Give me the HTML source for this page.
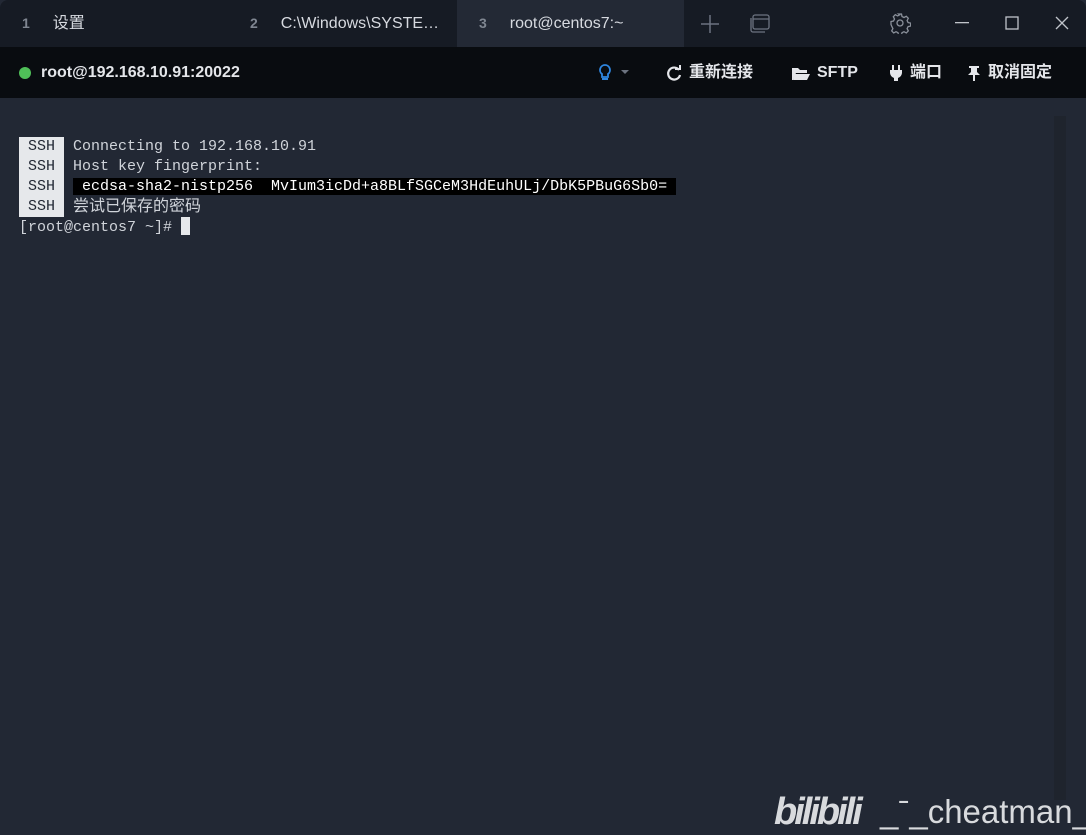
<!DOCTYPE html>
<html><head><meta charset="utf-8"><style>
*{margin:0;padding:0;box-sizing:border-box}
body{width:1086px;height:835px;overflow:hidden;background:#222834;font-family:"Liberation Sans","Noto Sans CJK SC",sans-serif;position:relative}
.tabs{position:absolute;left:0;top:0;width:1086px;height:47px;background:#161b24;border-radius:8px 8px 0 0}
.tab{position:absolute;top:0;height:47px;color:#d7dae0;font-size:16px;line-height:47px}
.tab .n{color:#7f8691;font-weight:bold;font-size:14px;margin-right:23px}
.active{background:#232935}
.bar{position:absolute;left:0;top:47px;width:1086px;height:51px;background:#090c10;color:#e4e6ea;font-weight:bold;font-size:16px}
.bar span{position:absolute;top:0;line-height:51px}
.term{position:absolute;left:19px;top:137px;font-family:"Liberation Mono","Noto Sans CJK SC",monospace;font-size:15px;color:#d0d4da;line-height:20px}
.term div{height:20px;white-space:nowrap}
.ssh{display:inline-block;background:#e6e8eb;color:#222834;width:45px;text-align:center;margin-right:9px;height:20px;vertical-align:top}
.hl{background:#000;color:#fff;padding:0 9px;white-space:pre}
svg{position:absolute}
</style></head><body>
<div class="tabs">
<div class="tab" style="left:22px"><span class="n">1</span>设置</div>
<div class="tab" style="left:250px"><span class="n">2</span>C:\Windows\SYSTE…</div>
<div class="tab active" style="left:457px;width:227px;padding-left:22px"><span class="n">3</span>root@centos7:~</div>
<svg style="left:700px;top:14px" width="20" height="20" stroke="#6c7380" stroke-width="1.5" fill="none"><path d="M10 1v18M1 10h18"/></svg>
<svg style="left:749px;top:13px" width="22" height="20" stroke="#6c7380" stroke-width="1.3" fill="none"><rect x="4" y="2" width="16" height="14" rx="2"/><path d="M4 6h16M2 5v12a2 2 0 0 0 2 2h12"/></svg>
<svg style="left:889px;top:12px" width="22" height="22" stroke="#8a909a" stroke-width="1.3" fill="none"><circle cx="11" cy="11" r="3"/><path d="M9.5 2h3l.5 2.5 2 1 2.3-1.2 2 2-1.2 2.3 1 2 2.5.5v3l-2.5.5-1 2 1.2 2.3-2 2-2.3-1.2-2 1-.5 2.5h-3l-.5-2.5-2-1-2.3 1.2-2-2 1.2-2.3-1-2L2 12.5v-3l2.5-.5 1-2-1.2-2.3 2-2 2.3 1.2 2-1z"/></svg>
<svg style="left:955px;top:22px" width="16" height="2"><rect width="14" height="1.3" fill="#c0c4ca"/></svg>
<svg style="left:1005px;top:16px" width="14" height="14" stroke="#c0c4ca" stroke-width="1.3" fill="none"><rect x="1" y="1" width="12" height="12"/></svg>
<svg style="left:1055px;top:16px" width="14" height="14" stroke="#c0c4ca" stroke-width="1.3"><path d="M1 1l12 12M13 1L1 13"/></svg>
</div>
<div class="bar">
<svg style="left:18px;top:19px" width="14" height="14"><circle cx="7" cy="7" r="6" fill="#4fbf58"/></svg>
<span style="left:41px">root@192.168.10.91:20022</span>
<svg style="left:598px;top:17px" width="34" height="18"><path d="M7 1a5 5 0 0 0-3 9v3h6v-3a5 5 0 0 0-3-9z" fill="none" stroke="#2f86e0" stroke-width="1.8"/><rect x="4" y="14" width="6" height="2" fill="#2f86e0"/><path d="M23 6h8l-4 4z" fill="#6c7380"/></svg>
<svg style="left:666px;top:18px" width="16" height="16" fill="none" stroke="#e4e6ea" stroke-width="2.2"><path d="M13 5A6 6 0 1 0 14 10"/><path d="M9 4h5V0" stroke-width="2"/></svg>
<span style="left:689px">重新连接</span>
<svg style="left:791px;top:20px" width="20" height="14"><path d="M1 1h6l2 2h7v3H5L2 13H1z" fill="#e4e6ea"/><path d="M4 7h15l-3 6H2z" fill="#e4e6ea"/></svg>
<span style="left:817px">SFTP</span>
<svg style="left:889px;top:17px" width="14" height="18" fill="#e4e6ea"><rect x="3" y="1" width="2" height="5"/><rect x="9" y="1" width="2" height="5"/><path d="M1 6h12v3a6 6 0 0 1-4 5v3H5v-3a6 6 0 0 1-4-5z"/></svg>
<span style="left:910px">端口</span>
<svg style="left:967px;top:18px" width="14" height="16" fill="#e4e6ea"><path d="M2 1h10v2h-2v4l3 3H1l3-3V3H2z"/><rect x="6" y="10" width="2" height="6"/></svg>
<span style="left:988px">取消固定</span>
</div>
<div style="position:absolute;left:1054px;top:116px;width:12px;height:684px;background:#1f242d"></div>
<div class="term">
<div><span class="ssh">SSH</span>Connecting to 192.168.10.91</div>
<div><span class="ssh">SSH</span>Host key fingerprint:</div>
<div><span class="ssh">SSH</span><span class="hl">ecdsa-sha2-nistp256  MvIum3icDd+a8BLfSGCeM3HdEuhULj/DbK5PBuG6Sb0=</span></div>
<div><span class="ssh">SSH</span><span style="font-size:16px;line-height:20px;vertical-align:top">尝试已保存的密码</span></div>
<div>[root@centos7 ~]# <span style="display:inline-block;width:9px;height:18px;background:#e6e8eb;vertical-align:-4px"></span></div>
</div>
<div style="position:absolute;left:774px;top:792px;font-size:38px;font-weight:bold;color:#d8dadd;font-style:italic;letter-spacing:-3px;line-height:40px">bilibili</div>
<div style="position:absolute;left:880px;top:792px;font-size:33px;color:#d8dadd;line-height:40px">_ˉ_cheatman_</div>
</body></html>
